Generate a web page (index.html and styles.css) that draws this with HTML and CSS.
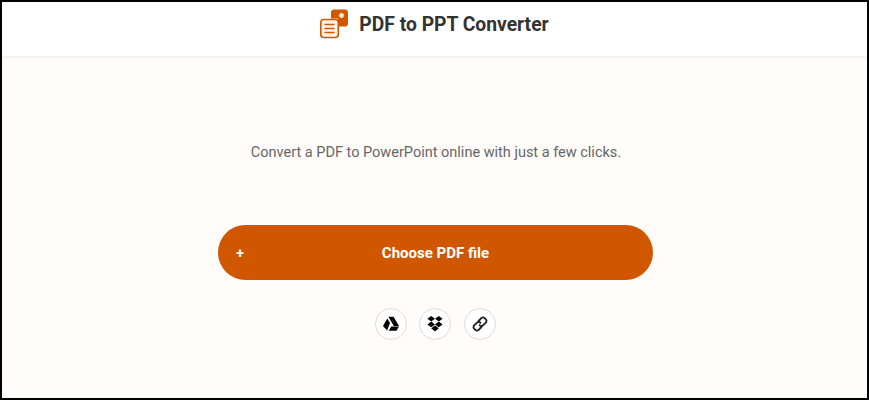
FILE: index.html
```html
<!DOCTYPE html>
<html lang="en">
<head>
    <meta charset="UTF-8">
    <meta name="viewport" content="width=device-width, initial-scale=1.0">
    <title>PDF to PPT Converter</title>
    <link rel="stylesheet" href="styles.css">
</head>
<body>
    <div class="page">
        <header class="top-bar">
            <svg class="logo" width="30" height="30" viewBox="0 0 30 30" aria-hidden="true">
                <path d="M12 3.500a3 3 0 0 1 3-3h11a3 3 0 0 1 3 3v11a3 3 0 0 1-3 3h-7V9.500h-7z" fill="#d05700"/>
                <circle cx="22.500" cy="6.500" r="2.200" fill="#fdf3ea" stroke="#f6c79f" stroke-width="1"/>
                <rect x="1.800" y="10.500" width="17.500" height="18" rx="3" fill="#fdf3ea" stroke="#d05700" stroke-width="1.600"/>
                <path d="M5.500 15.500h10M5.500 19.500h10M5.500 23.500h10" stroke="#d05700" stroke-width="1.600" fill="none"/>
            </svg>
            <h1>PDF to PPT Converter</h1>
        </header>
        <main class="content">
            <p class="lead">Convert a PDF to PowerPoint online with just a few clicks.</p>
            <button class="choose-btn" type="button">
                <span class="plus">+</span>
                <span class="choose-label">Choose PDF file</span>
            </button>
            <div class="sources">
                <a class="source" href="#" aria-label="Google Drive">
                    <svg width="16" height="16" viewBox="0 0 16 16"><path d="M5.400 .8h5.200l5.400 9.200h-5.200zM4.300 2.600 7 7.100l-2.900 7.300L0 10zM5.700 14.800l2.600-4.200h7.700l-2.500 4.200z" fill="#000"/></svg>
                </a>
                <a class="source" href="#" aria-label="Dropbox">
                    <svg width="16" height="18" viewBox="0 0 16 18"><path d="M4.200 1 8 3.800 4.200 6.600 .4 3.800zM11.800 1l3.800 2.800-3.800 2.800L8 3.800zM.4 9.400l3.800-2.800L8 9.400l-3.800 2.800zM11.800 6.600l3.800 2.800-3.800 2.800L8 9.400zM4.200 13.300 8 10.500l3.800 2.800L8 16.400z" fill="#000"/></svg>
                </a>
                <a class="source" href="#" aria-label="Link">
                    <svg width="16" height="16" viewBox="0 0 16 16" fill="none" stroke="#222" stroke-width="1.900" stroke-linecap="round"><path d="M6.600 5 9.300 2.100a2.300 2.300 0 0 1 3.300 0l1.200 1.200a2.300 2.300 0 0 1 0 3.300L11 9.300a2.300 2.300 0 0 1-3.300 0"/><path d="M9.400 11 6.700 13.900a2.300 2.300 0 0 1-3.300 0l-1.200-1.200a2.300 2.300 0 0 1 0-3.300L5 6.700a2.300 2.300 0 0 1 3.300 0"/></svg>
                </a>
            </div>
        </main>
    </div>
</body>
</html>
```

FILE: styles.css
```css
html, body {
    height: 100%;
}
body {
    font-family: Roboto, Arial, sans-serif;
    background: #fffcf9;
    color: #333;
    margin: 0;
    padding: 0;
}
.page {
    box-sizing: border-box;
    height: 400px;
    border: 2px solid #000;
    display: flex;
    flex-direction: column;
    overflow: hidden;
}
.top-bar {
    box-sizing: border-box;
    height: 54px;
    flex: none;
    padding: 0 1px 10px 0;
    background: #fff;
    box-shadow: 0 1px 3px rgba(0,0,0,0.08);
    display: flex;
    align-items: center;
    justify-content: center;
    gap: 10px;
}
.top-bar h1 {
    margin: 0;
    font-size: 19.300px;
    font-weight: 700;
    color: #333;
}
.logo {
    display: block;
}
.content {
    flex: 1;
    display: flex;
    flex-direction: column;
    align-items: center;
}
.lead {
    margin: 87px 0 0 3px;
    font-size: 14.500px;
    line-height: 20px;
    color: #666;
}
.choose-btn {
    width: 435px;
    height: 55px;
    margin: 62px 0 0 2px;
    padding: 0 18px;
    border: 0;
    border-radius: 28px;
    background: #d05700;
    color: #fff;
    font-family: inherit;
    font-weight: 700;
    display: flex;
    align-items: center;
}
.plus {
    font-size: 14px;
    width: 8px;
}
.choose-label {
    flex: 1;
    font-size: 15px;
    text-align: center;
    padding-right: 8px;
}
.sources {
    display: flex;
    gap: 12.500px;
    margin: 28px 0 0 1px;
}
.source {
    width: 30px;
    height: 30px;
    border: 1px solid #ddd;
    border-radius: 50%;
    background: #fff;
    display: flex;
    align-items: center;
    justify-content: center;
}
```
